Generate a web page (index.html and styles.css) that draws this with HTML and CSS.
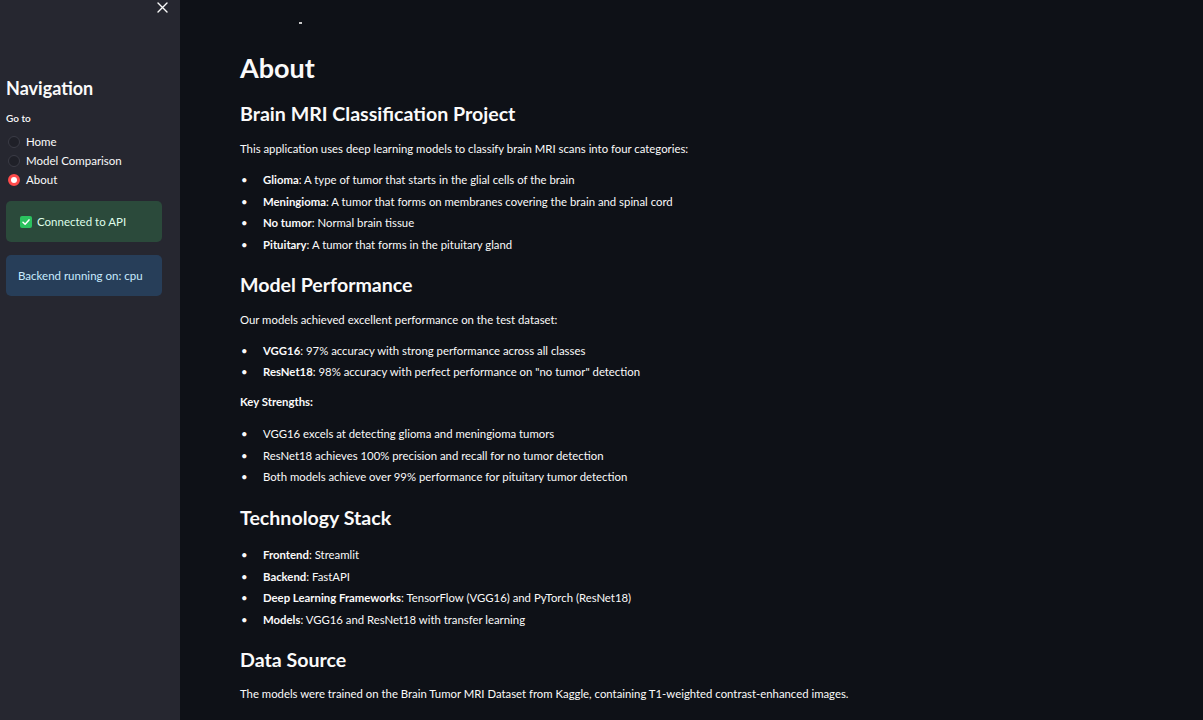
FILE: index.html
```html
<!DOCTYPE html>
<html>
<head>
<meta charset="utf-8">
<link rel="stylesheet" href="styles.css">
</head>
<body>
<div class="app">
  <aside class="sidebar">
    <div class="sidebar-top">
      <button class="close" aria-label="Close">
        <svg width="11" height="11" viewBox="0 0 11 11"><path d="M1 1L10 10M10 1L1 10" stroke="#fafafa" stroke-width="1.4" stroke-linecap="round"/></svg>
      </button>
    </div>
    <h2 class="nav-title">Navigation</h2>
    <div class="goto">Go to</div>
    <div class="radios">
      <label class="radio"><span class="dot"></span>Home</label>
      <label class="radio"><span class="dot"></span>Model Comparison</label>
      <label class="radio"><span class="dot on"></span>About</label>
    </div>
    <div class="alert success">
      <svg class="check" width="12" height="12" viewBox="0 0 12 12"><rect width="12" height="12" rx="2" fill="#2bc25f"/><path d="M3 6.2L5.1 8.2L9 3.9" stroke="#fff" stroke-width="1.5" fill="none" stroke-linecap="round" stroke-linejoin="round"/></svg>
      <span>Connected to API</span>
    </div>
    <div class="alert info">Backend running on: cpu</div>
  </aside>
  <main class="main">
    <div class="stray"></div>
    <h1 class="title">About</h1>
    <h2 class="h2 first">Brain MRI Classification Project</h2>
    <p class="p">This application uses deep learning models to classify brain MRI scans into four categories:</p>
    <ul class="list">
      <li><b>Glioma</b>: A type of tumor that starts in the glial cells of the brain</li>
      <li><b>Meningioma</b>: A tumor that forms on membranes covering the brain and spinal cord</li>
      <li><b>No tumor</b>: Normal brain tissue</li>
      <li><b>Pituitary</b>: A tumor that forms in the pituitary gland</li>
    </ul>
    <h2 class="h2">Model Performance</h2>
    <p class="p">Our models achieved excellent performance on the test dataset:</p>
    <ul class="list">
      <li><b>VGG16</b>: 97% accuracy with strong performance across all classes</li>
      <li><b>ResNet18</b>: 98% accuracy with perfect performance on "no tumor" detection</li>
    </ul>
    <p class="p strong"><b>Key Strengths:</b></p>
    <ul class="list strengths">
      <li>VGG16 excels at detecting glioma and meningioma tumors</li>
      <li>ResNet18 achieves 100% precision and recall for no tumor detection</li>
      <li>Both models achieve over 99% performance for pituitary tumor detection</li>
    </ul>
    <h2 class="h2 tech">Technology Stack</h2>
    <ul class="list tight">
      <li><b>Frontend</b>: Streamlit</li>
      <li><b>Backend</b>: FastAPI</li>
      <li><b>Deep Learning Frameworks</b>: TensorFlow (VGG16) and PyTorch (ResNet18)</li>
      <li><b>Models</b>: VGG16 and ResNet18 with transfer learning</li>
    </ul>
    <h2 class="h2">Data Source</h2>
    <p class="p last">The models were trained on the Brain Tumor MRI Dataset from Kaggle, containing T1-weighted contrast-enhanced images.</p>
  </main>
</div>
</body>
</html>
```
FILE: styles.css
```css
* { box-sizing: border-box; }
html, body { margin: 0; padding: 0; height: 100%; }
body {
  background: #0e1117;
  color: #fafafa;
  font-family: Lato, "Noto Sans", "Liberation Sans", sans-serif;
  overflow: hidden;
}
.app { display: flex; height: 720px; }
.sidebar {
  width: 180px;
  flex: none;
  background: #262730;
  padding: 0 18px 0 6px;
}
.sidebar-top { display: flex; justify-content: flex-end; height: 14px; margin-right: -6px; }
.close { background: none; border: 0; padding: 0; width: 11px; height: 11px; margin-top: 2px; display: flex; }
.nav-title {
  margin: 62px 0 0;
  font-size: 18px;
  line-height: 24px;
  font-weight: 700;
}
.goto { font-size: 10px; line-height: 14px; margin-top: 11px; font-weight: 600; }
.radios { margin-top: 7px; display: flex; flex-direction: column; }
.radio { display: flex; align-items: center; height: 19px; font-size: 11.5px; gap: 6px; padding-left: 2px; }
.dot {
  width: 12px; height: 12px; border-radius: 50%;
  background: #1f2028; border: 1px solid #3b3c46;
}
.dot.on { background: #ff4b4b; border: 3px solid #ff4b4b; position: relative; }
.dot.on::after { content: ""; position: absolute; inset: 0; background: #fff; border-radius: 50%; }
.alert {
  border-radius: 5px;
  height: 41px;
  display: flex; align-items: center;
  font-size: 11.5px;
  padding-left: 12px;
}
.success { background: #2b4a3b; margin-top: 12px; color: #dffde9; gap: 5px; padding-left: 14px; }
.info { background: #273e59; margin-top: 13px; color: #c7ebff; }
.main { flex: 1; padding-left: 60px; position: relative; }
.stray { position: absolute; left: 119px; top: 22px; width: 3px; height: 2px; background: #c8c8c8; }
.title { margin: 50px 0 0; font-size: 27px; line-height: 36px; font-weight: 700; }
.h2 { margin: 15px 0 0; font-size: 19.6px; line-height: 28px; font-weight: 700; }
.h2.first { margin-top: 14px; }
.h2.tech { margin-top: 16px; }
.p { margin: 12px 0 0; font-size: 11.35px; line-height: 18px; }
.p.strong { margin-top: 10px; }
.p.last { margin-top: 11px; }
.list { list-style: none; margin: 11px 0 0; padding: 0; font-size: 11.35px; }
.list.strengths { margin-top: 12px; }
.list.tight { margin-top: 12px; }
.list li { display: flex; line-height: 21.67px; }
.list li::before { content: "\2022"; width: 22px; flex: none; padding-left: 1px; }
b { font-weight: 700; }
```
